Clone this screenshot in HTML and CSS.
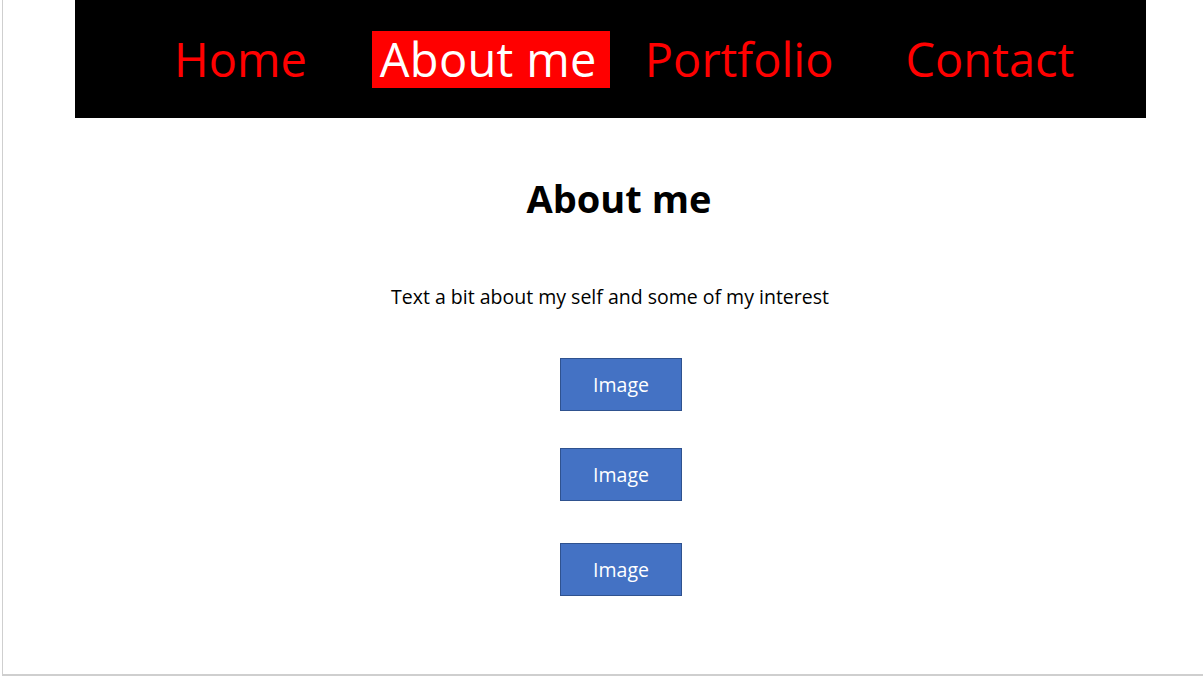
FILE: index.html
```html
<!DOCTYPE html>
<html lang="en">
<head>
<meta charset="utf-8">
<title>About me</title>
<link rel="stylesheet" href="styles.css">
</head>
<body>
<div class="frame">
  <nav class="nav">
    <a class="nav-item nav-home" href="#">Home</a>
    <a class="nav-item nav-about active" href="#">About me</a>
    <a class="nav-item nav-portfolio" href="#">Portfolio</a>
    <a class="nav-item nav-contact" href="#">Contact</a>
  </nav>
  <main class="content">
    <h1 class="title">About me</h1>
    <p class="intro">Text a bit about my self and some of my interest</p>
    <div class="images">
      <div class="image-box">Image</div>
      <div class="image-box">Image</div>
      <div class="image-box">Image</div>
    </div>
  </main>
</div>
</body>
</html>
```
FILE: styles.css
```css
html, body {
  margin: 0;
  padding: 0;
  background: #ffffff;
}
body {
  font-family: "Open Sans", "Liberation Sans", sans-serif;
  width: 1203px;
  height: 677px;
  overflow: hidden;
}
.frame {
  margin-left: 2px;
  height: 674px;
  border-left: 1px solid #cfcfcf;
  border-bottom: 2px solid #cfcfcf;
  box-sizing: content-box;
}
.nav {
  margin-left: 72px;
  width: 1071px;
  height: 118px;
  background: #000000;
  display: flex;
  align-items: center;
  padding-left: 99px;
  box-sizing: border-box;
}
.nav-item {
  color: #ff0000;
  text-decoration: none;
  font-size: 47px;
  line-height: 57px;
  height: 57px;
  white-space: nowrap;
}
.nav-home { margin-right: 65px; }
.nav-about { margin-right: 35px; }
.nav-portfolio { margin-right: 72px; }
.nav-item.active {
  background: #ff0000;
  color: #ffffff;
  width: 238px;
  box-sizing: border-box;
  padding-left: 8px;
  letter-spacing: 0.3px;
}
.content {
  display: flex;
  flex-direction: column;
  align-items: center;
  padding-left: 14px;
}
.title {
  margin: 55px 0 0 18px;
  font-size: 38px;
  font-weight: 700;
  line-height: 50px;
  color: #000000;
}
.intro {
  margin: 61px 0 0 0;
  font-size: 19.5px;
  line-height: 26px;
  color: #000000;
}
.images {
  display: flex;
  flex-direction: column;
  align-items: center;
  margin: 48px 0 0 22px;
}
.image-box {
  width: 120px;
  height: 51px;
  background: #4472c4;
  border: 1px solid #2f528f;
  color: #ffffff;
  font-size: 19.5px;
  display: flex;
  align-items: center;
  justify-content: center;
}
.image-box:nth-child(2) { margin-top: 37px; }
.image-box:nth-child(3) { margin-top: 42px; }
```
